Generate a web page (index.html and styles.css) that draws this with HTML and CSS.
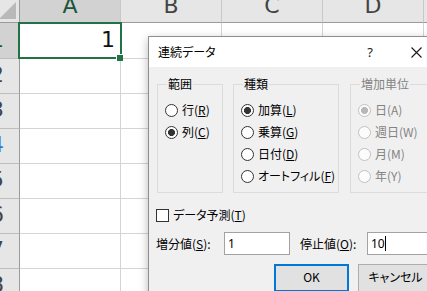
FILE: index.html
```html
<!DOCTYPE html>
<html lang="ja">
<head>
<meta charset="utf-8">
<link rel="stylesheet" href="styles.css">
</head>
<body>
<div class="sheet">
  <div class="corner"><svg class="tri" width="17" height="17" viewBox="0 0 17 17"><polygon points="17,0 17,17 0,17" fill="#b9b9b9"/></svg></div>
  <div class="colhead sel">A</div>
  <div class="colhead">B</div>
  <div class="colhead">C</div>
  <div class="colhead">D</div>
  <div class="colhead">E</div>

  <div class="rowhead sel">1</div>
  <div class="cell num">1</div><div class="cell"></div><div class="cell"></div><div class="cell"></div><div class="cell"></div>
  <div class="rowhead">2</div>
  <div class="cell"></div><div class="cell"></div><div class="cell"></div><div class="cell"></div><div class="cell"></div>
  <div class="rowhead">3</div>
  <div class="cell"></div><div class="cell"></div><div class="cell"></div><div class="cell"></div><div class="cell"></div>
  <div class="rowhead hot">4</div>
  <div class="cell"></div><div class="cell"></div><div class="cell"></div><div class="cell"></div><div class="cell"></div>
  <div class="rowhead">5</div>
  <div class="cell"></div><div class="cell"></div><div class="cell"></div><div class="cell"></div><div class="cell"></div>
  <div class="rowhead">6</div>
  <div class="cell"></div><div class="cell"></div><div class="cell"></div><div class="cell"></div><div class="cell"></div>
  <div class="rowhead">7</div>
  <div class="cell"></div><div class="cell"></div><div class="cell"></div><div class="cell"></div><div class="cell"></div>
  <div class="rowhead">8</div>
  <div class="cell"></div><div class="cell"></div><div class="cell"></div><div class="cell"></div><div class="cell"></div>
</div>
<div class="selection"><span class="handle"></span></div>

<div class="dialog">
  <div class="titlebar">
    <span class="title">連続データ</span>
    <span class="tbtn help">?</span>
    <span class="tbtn close"><svg width="11" height="11" viewBox="0 0 11 11"><path d="M0.5 0.5 L10.5 10.5 M10.5 0.5 L0.5 10.5" stroke="#1a1a1a" stroke-width="1.1" fill="none"/></svg></span>
  </div>
  <div class="dbody">
    <div class="groups">
      <fieldset class="group g1">
        <legend>範囲</legend>
        <div class="opt"><span class="radio"></span>行(<u>R</u>)</div>
        <div class="opt"><span class="radio on"></span>列(<u>C</u>)</div>
      </fieldset>
      <fieldset class="group g2">
        <legend>種類</legend>
        <div class="opt"><span class="radio on"></span>加算(<u>L</u>)</div>
        <div class="opt"><span class="radio"></span>乗算(<u>G</u>)</div>
        <div class="opt"><span class="radio"></span>日付(<u>D</u>)</div>
        <div class="opt"><span class="radio"></span>オートフィル(<u>F</u>)</div>
      </fieldset>
      <fieldset class="group g3 disabled">
        <legend>増加単位</legend>
        <div class="opt"><span class="radio on"></span>日(A)</div>
        <div class="opt"><span class="radio"></span>週日(W)</div>
        <div class="opt"><span class="radio"></span>月(M)</div>
        <div class="opt"><span class="radio"></span>年(Y)</div>
      </fieldset>
    </div>
    <div class="check"><span class="box"></span>データ予測(<u>T</u>)</div>
    <div class="inputs">
      <span class="lbl">増分値(<u>S</u>):</span>
      <div class="field">1</div>
      <span class="lbl lbl2">停止値(<u>O</u>):</span>
      <div class="field wide">10<span class="caret"></span></div>
    </div>
    <div class="buttons">
      <div class="btn ok">OK</div>
      <div class="btn">キャンセル</div>
    </div>
  </div>
</div>
</body>
</html>
```

FILE: styles.css
```css
html, body {
  margin: 0;
  padding: 0;
}
body {
  width: 427px;
  height: 291px;
  overflow: hidden;
  position: relative;
  background: #fff;
  font-family: "Noto Sans CJK JP", "Noto Sans", sans-serif;
}

/* ---------- spreadsheet ---------- */
.sheet {
  display: grid;
  grid-template-columns: 45px repeat(5, 101px);
  grid-template-rows: 30px 36px repeat(7, 35px);
  width: max-content;
  margin: -7px 0 0 -25px;
  font-family: "DejaVu Sans", sans-serif;
  font-size: 22px;
  line-height: 26px;
}
.sheet > div {
  box-sizing: border-box;
}
.cell {
  border-right: 1px solid #d4d4d4;
  border-bottom: 1px solid #d4d4d4;
}
.cell.num {
  display: flex;
  align-items: flex-end;
  justify-content: flex-end;
  padding: 0 5px 5px 0;
  color: #111;
}
.corner {
  background: #e6e6e6;
  border-right: 1px solid #9b9b9b;
  border-bottom: 1px solid #9b9b9b;
  display: flex;
  align-items: flex-end;
  justify-content: flex-end;
  padding: 0 3px 3px 0;
}
.tri {
  display: block;
}
.colhead {
  background: #e6e6e6;
  border-right: 1px solid #c8c8c8;
  border-bottom: 1px solid #9b9b9b;
  display: flex;
  align-items: flex-end;
  justify-content: center;
  padding-bottom: 3px;
  color: #444;
}
.colhead.sel {
  background: #d2d2d2;
  color: #20553a;
}
.rowhead {
  background: #e6e6e6;
  border-right: 1px solid #9b9b9b;
  border-bottom: 1px solid #bdbdbd;
  display: flex;
  align-items: flex-end;
  justify-content: center;
  padding-bottom: 5px;
  color: #444;
}
.rowhead.sel {
  background: #d2d2d2;
  color: #20553a;
}
.rowhead.hot {
  color: #2f7bd4;
}
.selection {
  position: absolute;
  left: 18px;
  top: 22px;
  width: 104px;
  height: 37px;
  box-sizing: border-box;
  border: 2px solid #217346;
}
.handle {
  position: absolute;
  right: -3px;
  bottom: -4px;
  width: 6px;
  height: 6px;
  background: #217346;
  border-left: 1px solid #fff;
  border-top: 1px solid #fff;
}

/* ---------- dialog ---------- */
.dialog {
  position: absolute;
  left: 148px;
  top: 36px;
  width: 292px;
  height: 270px;
  box-sizing: border-box;
  border: 1px solid #8e8e8e;
  background: #f0f0f0;
  box-shadow: 0 3px 9px rgba(0, 0, 0, 0.28);
  font-size: 12px;
  line-height: 16px;
  color: #000;
  font-feature-settings: "palt";
}
.titlebar {
  height: 30px;
  background: #fff;
  display: flex;
  align-items: center;
}
.title {
  padding-left: 9px;
  flex: 1;
}
.tbtn {
  width: 46px;
  height: 30px;
  display: flex;
  align-items: center;
  justify-content: center;
}
.help {
  font-family: "Noto Sans", sans-serif;
  font-size: 13px;
  color: #1a1a1a;
}
.close svg {
  display: block;
}
.dbody {
  padding: 9px 6px 0 8px;
}
.groups {
  display: flex;
  align-items: flex-start;
}
.group {
  margin: 0;
  padding: 7px 0 5px 7px;
  border: 1px solid #dcdcdc;
  min-width: 0;
  box-sizing: border-box;
  flex: none;
}
.group legend {
  padding: 0 1px;
  margin-left: 2px;
  line-height: 16px;
}
.g1 {
  width: 66px;
  height: 117px;
}
.g2 {
  width: 106px;
  height: 117px;
  margin-left: 10px;
}
.g3 {
  width: 100px;
  height: 117px;
  margin-left: 11px;
}
.opt {
  height: 22px;
  display: flex;
  align-items: center;
  white-space: nowrap;
}
.radio {
  width: 13px;
  height: 13px;
  box-sizing: border-box;
  border: 1px solid #333;
  border-radius: 50%;
  background: #fff;
  margin-right: 4px;
  flex: none;
}
.radio.on {
  background: radial-gradient(circle, #333 0, #333 3.2px, #fff 3.8px);
}
.disabled {
  color: #838383;
}
.disabled .radio {
  border-color: #c2c2c2;
  background: #fcfcfc;
}
.disabled .radio.on {
  background: radial-gradient(circle, #b8b8b8 0, #b8b8b8 3.2px, #fcfcfc 3.8px);
}
.check {
  margin-top: 14px;
  margin-left: -1px;
  height: 16px;
  display: flex;
  align-items: center;
}
.box {
  width: 13px;
  height: 13px;
  box-sizing: border-box;
  border: 1px solid #333;
  background: #fff;
  margin-right: 4px;
  flex: none;
}
.inputs {
  margin-top: 9px;
  margin-left: -1px;
  display: flex;
  align-items: center;
  height: 23px;
}
.lbl {
  width: 68px;
  flex: none;
  white-space: nowrap;
}
.lbl2 {
  width: 67px;
  margin-left: 10px;
}
.field {
  width: 66px;
  height: 23px;
  flex: none;
  box-sizing: border-box;
  border: 1px solid #a2a2a2;
  background: #fff;
  padding-left: 3px;
  display: flex;
  align-items: center;
  font-family: "Noto Sans", sans-serif;
}
.field.wide {
  width: 80px;
}
.caret {
  display: inline-block;
  width: 1px;
  height: 15px;
  background: #000;
}
.buttons {
  margin-top: 9px;
  display: flex;
  justify-content: flex-end;
  gap: 9px;
}
.btn {
  width: 75px;
  height: 28px;
  flex: none;
  box-sizing: border-box;
  border: 1px solid #adadad;
  background: #e1e1e1;
  display: flex;
  align-items: center;
  justify-content: center;
  padding-bottom: 2px;
}
.btn.ok {
  border: 2px solid #0078d7;
}
```
